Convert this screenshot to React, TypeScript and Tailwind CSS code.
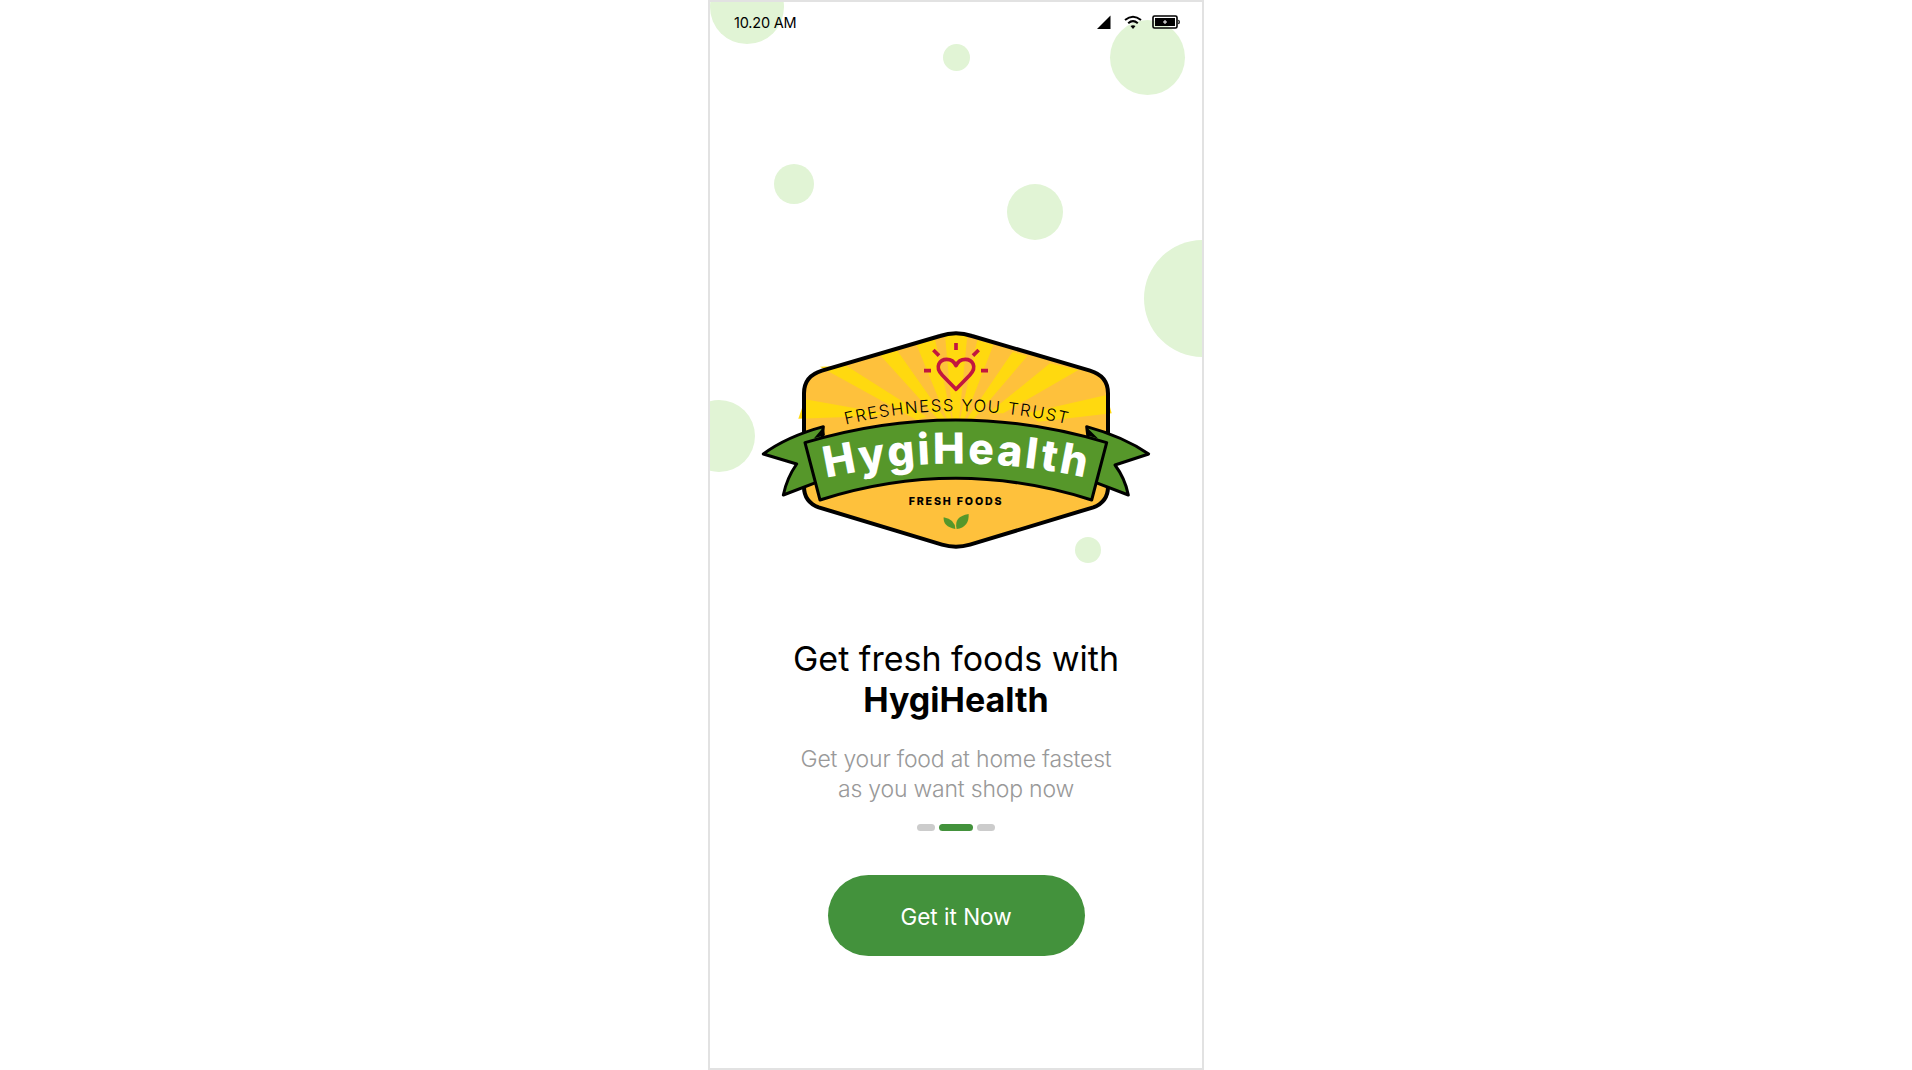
import React from "react";

function Logo() {
  return (
    <svg viewBox="0 0 1290 780" className="block w-[430px] h-[260px]" aria-label="HygiHealth logo">
      <path d="M600 78 Q648 62 696 78 L1050 182 Q1104 198 1104 250 L1104 530 Q1104 575 1060 592 L690 704 Q648 716 606 704 L236 592 Q192 575 192 530 L192 250 Q192 198 246 182 Z" fill="#fec13c" />
      <g fill="#ffd90f">
        <polygon points="615,75 682,75 655,350 640,350" />
        <polygon points="530,105 585,88 640,350 630,350" />
        <polygon points="712,90 760,105 665,350 655,350" />
        <polygon points="420,135 472,122 625,340 610,345" />
        <polygon points="818,125 862,138 690,340 675,335" />
        <polygon points="240,170 320,168 560,320 530,330" />
        <polygon points="930,160 1015,180 790,310 745,310" />
        <polygon points="195,268 430,310 400,318 175,326" />
        <polygon points="1100,255 1115,310 895,335 860,310" />
      </g>
      <path d="M600 78 Q648 62 696 78 L1050 182 Q1104 198 1104 250 L1104 530 Q1104 575 1060 592 L690 704 Q648 716 606 704 L236 592 Q192 575 192 530 L192 250 Q192 198 246 182 Z" fill="none" stroke="#000" strokeWidth="12" strokeLinejoin="round" />
      <g fill="none" stroke="#c2163f" strokeWidth="11">
        <path d="M648 238 L607 196 C582 170 600 148 620 148 C635 148 644 158 648 167 C652 158 661 148 676 148 C696 148 714 170 689 196 Z" strokeLinejoin="round" />
        <path d="M648 99V120M580 120L597 137M716 120L699 137M552 182H573M723 182H744" />
      </g>
      <defs>
        <path id="arc-top" d="M312 345 Q648 262 990 345" />
        <path id="arc-name" d="M250 506 Q648 416 1050 506" />
      </defs>
      <text className="font-['Inter',sans-serif]" fontSize="50" fontWeight="350" letterSpacing="4.5" fill="#000" textAnchor="middle">
        <textPath href="#arc-top" startOffset="50%">FRESHNESS YOU TRUST</textPath>
      </text>
      <g fill="#56972a" stroke="#000" strokeWidth="9" strokeLinejoin="round">
        <path d="M250 350 Q140 380 70 432 L170 462 Q140 505 130 555 L235 515 Z" />
        <path d="M1040 350 Q1150 380 1226 432 L1125 465 Q1155 505 1165 555 L1060 515 Z" />
        <path d="M195 398 Q648 262 1100 398 L1055 570 Q648 440 240 570 Z" />
      </g>
      <path d="M250 352 L255 376 L222 385 Z M1040 352 L1042 376 L1075 386 Z" fill="#000" />
      <text className="font-['Inter',sans-serif]" fontSize="128" fontWeight="800" letterSpacing="8" fill="#fff" textAnchor="middle">
        <textPath href="#arc-name" startOffset="50%">HygiHealth</textPath>
      </text>
      <text className="font-['Inter',sans-serif]" x="648" y="585" fontSize="32" fontWeight="800" letterSpacing="5.5" fill="#000" textAnchor="middle">FRESH FOODS</text>
      <g fill="#56972a">
        <path d="M646 657 Q608 650 611 622 Q645 628 646 657 Z" />
        <path d="M650 657 Q640 620 686 612 Q688 652 650 657 Z" />
      </g>
    </svg>
  );
}

export default function App() {
  return (
    <div className="min-h-[1070px] bg-white flex justify-center font-['Inter',sans-serif]">
      <div className="relative w-[496px] h-[1070px] overflow-hidden border-2 border-[#e2e2e2] bg-white flex flex-col items-center">
        <div className="absolute left-[0px] top-[-32px] w-[74px] h-[74px] rounded-full bg-[#e1f4d5]" />
        <div className="absolute left-[233px] top-[42px] w-[27px] h-[27px] rounded-full bg-[#e1f4d5]" />
        <div className="absolute left-[400px] top-[18px] w-[75px] h-[75px] rounded-full bg-[#e1f4d5]" />
        <div className="absolute left-[64px] top-[162px] w-[40px] h-[40px] rounded-full bg-[#e1f4d5]" />
        <div className="absolute left-[297px] top-[182px] w-[56px] h-[56px] rounded-full bg-[#e1f4d5]" />
        <div className="absolute left-[434px] top-[238px] w-[117px] h-[117px] rounded-full bg-[#e1f4d5]" />
        <div className="absolute left-[-27px] top-[398px] w-[72px] h-[72px] rounded-full bg-[#e1f4d5]" />
        <div className="absolute left-[365px] top-[535px] w-[26px] h-[26px] rounded-full bg-[#e1f4d5]" />

        <div className="relative w-full h-[40px] flex items-center justify-between pl-[24px] pr-[22px] text-[14.5px] text-black">
          <span className="tracking-[-0.2px] pt-[1px]">10.20 AM</span>
          <div className="flex items-center gap-[12px]">
            <svg viewBox="0 0 14 14" className="w-[14px] h-[14px] translate-x-[1px]"><polygon points="13.5,0.5 13.5,14 0,14" fill="#000" /></svg>
            <svg viewBox="0 0 18 14" className="w-[18px] h-[14px] translate-x-[2px]" fill="none" stroke="#000" strokeWidth="2">
              <path d="M1 5 Q9 -1.5 17 5" />
              <path d="M4.2 8.2 Q9 4 13.8 8.2" />
              <path d="M6.5 11 L9 14 L11.5 11 Q9 9.5 6.5 11 Z" fill="#000" stroke="none" />
            </svg>
            <svg viewBox="0 0 28 14" className="w-[28px] h-[14px]">
              <rect x="1" y="1" width="24" height="12" rx="1.5" fill="none" stroke="#000" strokeWidth="1.6" />
              <rect x="3" y="3" width="20" height="8" fill="#000" />
              <path d="M26.5 5 Q28 7 26.5 9" fill="none" stroke="#000" strokeWidth="1.2" />
              <path d="M13 5V9M11 7H15" stroke="#fff" strokeWidth="1" />
            </svg>
          </div>
        </div>

        <div className="relative mt-[268px] mr-[2px]">
          <Logo />
        </div>

        <h1 className="relative mt-[68px] text-[34px] leading-[41px] font-normal text-black text-center">
          Get fresh foods with
          <br />
          <span className="font-bold">HygiHealth</span>
        </h1>
        <p className="relative mt-[24px] text-[23px] leading-[30px] font-light text-[#999999] text-center tracking-[-0.2px]">
          Get your food at home fastest
          <br />
          as you want shop now
        </p>
        <div className="relative mt-[20px] flex gap-[4px]">
          <span className="w-[18px] h-[7px] rounded-full bg-[#cccccc]" />
          <span className="w-[34px] h-[7px] rounded-full bg-[#43923c]" />
          <span className="w-[18px] h-[7px] rounded-full bg-[#cccccc]" />
        </div>
        <button className="relative mt-[44px] w-[257px] h-[81px] rounded-full bg-[#43923c] text-white text-[22.5px] font-normal pt-[2px]">
          Get it Now
        </button>
      </div>
    </div>
  );
}
